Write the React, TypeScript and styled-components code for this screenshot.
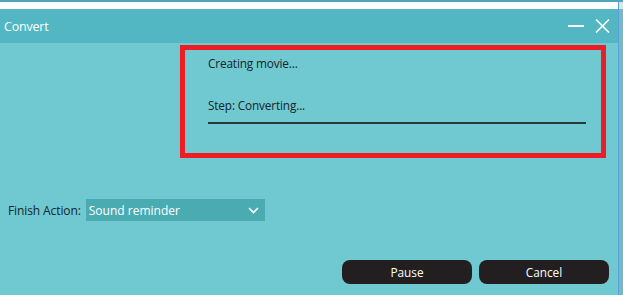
import React from "react";
import styled, { createGlobalStyle } from "styled-components";

const Global = createGlobalStyle`
  html, body { margin: 0; padding: 0; width: 623px; height: 295px; overflow: hidden; }
  body { font-family: "Open Sans", "Noto Sans", "DejaVu Sans", sans-serif; background: #70c8d0; }
  * { box-sizing: border-box; }
`;

const Page = styled.div`
  width: 623px;
  height: 295px;
  display: flex;
  flex-direction: column;
`;

const DesktopStrip = styled.div`
  height: 2px;
  background: #4fa6bc;
  flex: none;
`;

const Main = styled.div`
  flex: 1;
  display: flex;
`;

const Window = styled.div`
  flex: 1;
  display: flex;
  flex-direction: column;
  border-right: 1px solid #5b9fd8;
`;

const SideStrip = styled.div`
  width: 4px;
  background: #6fbcc8;
  border-top: 7px solid #d8e8ee;
`;

const TopBar = styled.div`
  height: 7px;
  background: #ffffff;
  flex: none;
`;

const TitleBar = styled.div`
  height: 34px;
  background: #52b7c3;
  display: flex;
  align-items: center;
  padding: 0 6px 0 4px;
  color: #ffffff;
  flex: none;
`;

const Title = styled.div`
  font-size: 12.5px;
  flex: 1;
  letter-spacing: -0.2px;
`;

const IconButton = styled.div`
  width: 20px;
  height: 20px;
  display: flex;
  align-items: center;
  justify-content: center;
  margin-left: 6px;
`;

const Body = styled.div`
  flex: 1;
  background: #70c8d0;
  display: flex;
  flex-direction: column;
  padding: 2px 9px 11px 8px;
  color: #14262a;
`;

const ProgressPanel = styled.div`
  margin-left: 172px;
  width: 426px;
  height: 113px;
  border: 5px solid #ee1c25;
  padding: 5px 15px 0 23px;
  display: flex;
  flex-direction: column;
  font-size: 11.8px;
`;

const StatusLine = styled.div<{ $gap?: number }>`
  height: 16px;
  line-height: 16px;
  margin-top: ${(p) => p.$gap ?? 0}px;
  letter-spacing: -0.15px;
`;

const ProgressTrack = styled.div`
  margin-top: 9px;
  height: 2px;
  background: #28383c;
`;

const FinishRow = styled.div`
  margin-top: 41px;
  display: flex;
  align-items: center;
  gap: 5px;
  font-size: 12px;
`;

const Label = styled.span`
  letter-spacing: -0.1px;
`;

const Select = styled.div`
  width: 179px;
  height: 22px;
  background: #4aabb3;
  color: #ffffff;
  display: flex;
  align-items: center;
  padding: 0 6px 0 3px;
  justify-content: space-between;
`;

const Buttons = styled.div`
  margin-top: auto;
  display: flex;
  justify-content: flex-end;
  gap: 7px;
`;

const Button = styled.div`
  width: 130px;
  height: 24px;
  border-radius: 8px;
  background: #231f20;
  color: #ffffff;
  font-size: 11.8px;
  display: flex;
  align-items: center;
  justify-content: center;
`;

export default function App() {
  return (
    <Page>
      <Global />
      <DesktopStrip />
      <Main>
        <Window>
          <TopBar />
          <TitleBar>
            <Title>Convert</Title>
            <IconButton>
              <svg width="16" height="14" viewBox="0 0 16 14">
                <rect x="0" y="6" width="16" height="2" fill="#ffffff" />
              </svg>
            </IconButton>
            <IconButton>
              <svg width="15" height="14" viewBox="0 0 15 14">
                <path d="M1 0.5 L14 13.5 M14 0.5 L1 13.5" stroke="#ffffff" strokeWidth="1.6" fill="none" />
              </svg>
            </IconButton>
          </TitleBar>
          <Body>
            <ProgressPanel>
              <StatusLine>Creating movie...</StatusLine>
              <StatusLine $gap={26}>Step: Converting...</StatusLine>
              <ProgressTrack />
            </ProgressPanel>
            <FinishRow>
              <Label>Finish Action:</Label>
              <Select>
                <span>Sound reminder</span>
                <svg width="11" height="7" viewBox="0 0 11 7">
                  <path d="M1 1 L5.5 5.5 L10 1" stroke="#ffffff" strokeWidth="1.6" fill="none" />
                </svg>
              </Select>
            </FinishRow>
            <Buttons>
              <Button>Pause</Button>
              <Button>Cancel</Button>
            </Buttons>
          </Body>
        </Window>
        <SideStrip />
      </Main>
    </Page>
  );
}
